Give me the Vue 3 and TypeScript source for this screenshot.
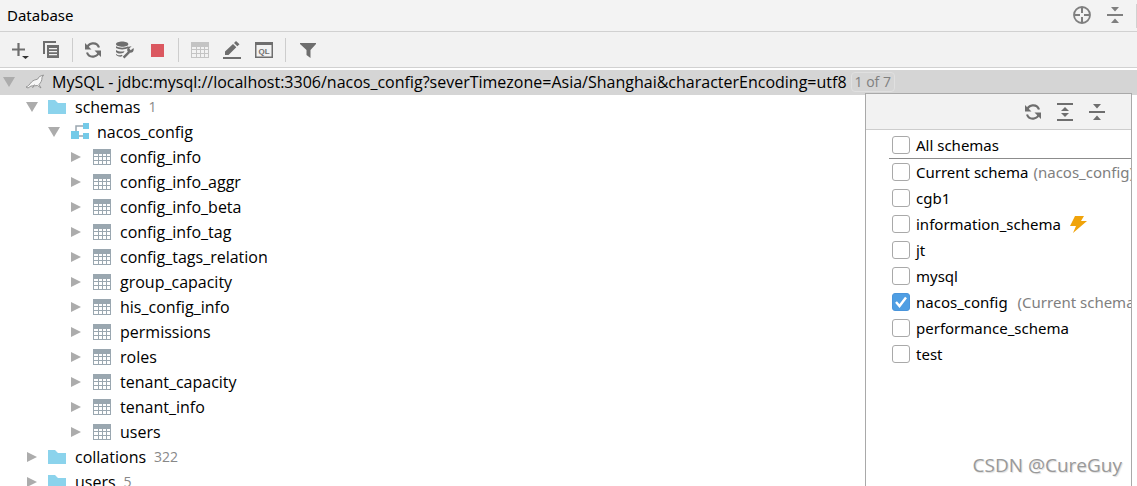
<script setup lang="ts">
import { ref } from 'vue'

interface TreeNode {
  label: string
  kind: 'folder' | 'schema' | 'table'
  level: number
  open: boolean
  count?: number
}

interface SchemaOption {
  id: string
  label: string
  note?: string
  wideNote?: boolean
  bolt?: boolean
  checked: boolean
}

const tables = [
  'config_info', 'config_info_aggr', 'config_info_beta', 'config_info_tag',
  'config_tags_relation', 'group_capacity', 'his_config_info', 'permissions',
  'roles', 'tenant_capacity', 'tenant_info', 'users',
]

const nodes: TreeNode[] = [
  { label: 'schemas', kind: 'folder', level: 1, open: true, count: 1 },
  { label: 'nacos_config', kind: 'schema', level: 2, open: true },
  ...tables.map((label): TreeNode => ({ label, kind: 'table', level: 3, open: false })),
  { label: 'collations', kind: 'folder', level: 1, open: false, count: 322 },
  { label: 'users', kind: 'folder', level: 1, open: false, count: 5 },
]

const allSchemas = ref(false)
const options = ref<SchemaOption[]>([
  { id: 'current', label: 'Current schema', note: '(nacos_config)', checked: false },
  { id: 'cgb1', label: 'cgb1', checked: false },
  { id: 'information', label: 'information_schema', bolt: true, checked: false },
  { id: 'jt', label: 'jt', checked: false },
  { id: 'mysql', label: 'mysql', checked: false },
  { id: 'nacos', label: 'nacos_config', note: '(Current schema)', wideNote: true, checked: true },
  { id: 'performance', label: 'performance_schema', checked: false },
  { id: 'test', label: 'test', checked: false },
])
</script>

<template>
  <div class="window">
    <svg class="defs" aria-hidden="true">
      <symbol id="i-refresh" viewBox="0 0 18 18">
        <path d="M3 8A6.2 6.2 0 0 1 15 6.500M15 10A6.2 6.2 0 0 1 3 11.500" fill="none" stroke="currentColor" stroke-width="2.200" />
        <path d="M1 2v6.500h6.500zM17 16V9.500h-6.500z" fill="currentColor" />
      </symbol>
      <symbol id="i-collapse" viewBox="0 0 18 18">
        <path d="M1 8h16v2H1zM5 1h8L9 5.500zM5 17h8l-4-4.500z" fill="currentColor" />
      </symbol>
      <symbol id="i-expand" viewBox="0 0 18 18">
        <path d="M1 0h16v2H1zM1 16h16v2H1zM5 8h8L9 4zM5 10h8l-4 4z" fill="currentColor" />
      </symbol>
      <symbol id="i-table" viewBox="0 0 18 16">
        <path d="M0 0h18v16H0zM1 5v2h4V5zM6 5v2h3V5zM10 5v2h3V5zM14 5v2h3V5zM1 8v3h4V8zM6 8v3h3V8zM10 8v3h3V8zM14 8v3h3V8zM1 12v3h4v-3zM6 12v3h3v-3zM10 12v3h3v-3zM14 12v3h3v-3z" fill="currentColor" fill-rule="evenodd" />
      </symbol>
      <symbol id="i-folder" viewBox="0 0 18 14">
        <path d="M0 0h7l3 3h8v11H0z" fill="#8bd3ec" />
      </symbol>
      <symbol id="i-schema" viewBox="0 0 18 17">
        <path d="M5 8V3h7M8 13h4" fill="none" stroke="#9aa7b0" stroke-width="1.500" />
        <path d="M12 0h6v6h-6zM0 8h8v8H0zM12 10h6v6h-6z" fill="#74cae8" />
      </symbol>
    </svg>

    <header class="titlebar">
      <h1>Database</h1>
      <div class="title-actions">
        <button type="button" aria-label="Scroll to selection">
          <svg class="ico" viewBox="0 0 18 18"><circle cx="9" cy="9" r="8" fill="none" stroke="currentColor" stroke-width="1.800" /><path d="M9 2v5M9 11v5M2 9h5M11 9h5" stroke="currentColor" stroke-width="2" /></svg>
        </button>
        <button type="button" aria-label="Collapse all"><svg class="ico"><use href="#i-collapse" /></svg></button>
      </div>
      <i class="edge"></i>
    </header>

    <div class="toolbar" role="toolbar" aria-label="Database tools">
      <button type="button" aria-label="New">
        <svg class="ico" viewBox="0 0 18 18"><path d="M7.500 2v13M1 8.500h13" stroke="currentColor" stroke-width="2.200" /><path d="M11 15h7l-3.500 3z" fill="#333" /></svg>
      </button>
      <button type="button" aria-label="Duplicate">
        <svg class="ico" viewBox="0 0 18 18"><path d="M1 13V1h12" fill="none" stroke="currentColor" stroke-width="2" /><path d="M4 4h12v13H4zM6 7v1.300h8V7zM6 10v1.300h8V10zM6 13v1.300h8V13z" fill="currentColor" fill-rule="evenodd" /></svg>
      </button>
      <i class="divider"></i>
      <button type="button" aria-label="Refresh"><svg class="ico"><use href="#i-refresh" /></svg></button>
      <button type="button" aria-label="Data source properties">
        <svg class="ico" viewBox="0 0 19 18">
          <path d="M0 3c0-3.800 13-3.800 13 0s-13 3-13 0zM0 5c3 2 10 2 13 0v2c-3 2-10 2-13 0zM0 9c3 2 7 2 9 1l-1 2c-3 1-6 1-8-1zM0 13c2 2 4 2 6 1l1 1-2 1c-3 0-4-1-5-2z" fill="currentColor" />
          <path d="M8 17l6-6" stroke="currentColor" stroke-width="2.600" />
          <path d="M16.500 5l-2.500 2.500 1.500 1.700 3-2.200c1 3-1.500 5.700-4.500 4.700-2.500-.8-3-4-.8-6z" fill="currentColor" />
        </svg>
      </button>
      <button type="button" aria-label="Stop"><svg class="ico" viewBox="0 0 18 18"><path d="M3 3h13v13H3z" fill="#db5860" /></svg></button>
      <i class="divider"></i>
      <button type="button" class="off" aria-label="Open table" disabled><svg class="ico"><use href="#i-table" /></svg></button>
      <button type="button" aria-label="Edit">
        <svg class="ico" viewBox="0 0 18 18"><path d="M0 16h18v2H0zM2 14v-3.500L10 3l3.300 3.300L5.500 14zM11 2l2-2 3.500 3.300-2.200 2z" fill="currentColor" /></svg>
      </button>
      <button type="button" aria-label="Query console">
        <svg class="ico" viewBox="0 0 18 18"><path d="M0 1h18v16H0zM1.500 4v11.500h15V4z" fill="currentColor" fill-rule="evenodd" /><text x="9" y="13" text-anchor="middle" class="ql">QL</text></svg>
      </button>
      <i class="divider"></i>
      <button type="button" aria-label="Filter"><svg class="ico" viewBox="0 0 18 18"><path d="M2 2h16v1l-5.500 6v8l-4-3V9L2 3z" fill="currentColor" /></svg></button>
    </div>

    <main class="content">
      <ul class="tree" role="tree">
        <li class="row root" role="treeitem" aria-expanded="true" aria-selected="true">
          <svg class="arrow" viewBox="0 0 12 12"><path d="M0 1h12L6 11z" /></svg>
          <svg class="seal" viewBox="0 0 20 16"><path d="M1 13c2-.5 3.500-2.500 5.500-5 2-2 4-2.200 6-2.800L14.500 2.500 18.500 1 17 3.500c0 3-1 5-3 7l2 3.500-3.500-2.500c-2 .5-4 .2-6.500.5L3 14zM9.500 10.500L7.500 14" fill="#f7f7f7" stroke="#8c8c8c" stroke-width=".9" /></svg>
          <span>MySQL - jdbc:mysql://localhost:3306/nacos_config?severTimezone=Asia/Shanghai&amp;characterEncoding=utf8</span>
          <button type="button" class="badge">1 of 7</button>
        </li>
        <li v-for="(node, i) in nodes" :key="i" class="row" :class="`level-${node.level}`" role="treeitem" :aria-expanded="node.open">
          <svg class="arrow" viewBox="0 0 12 12"><path :d="node.open ? 'M0 1h12L6 11z' : 'M1 1v10l10-5z'" /></svg>
          <svg class="node-icon" :class="node.kind"><use :href="`#i-${node.kind}`" /></svg>
          <span>{{ node.label }}</span>
          <span v-if="node.count" class="count">{{ node.count }}</span>
        </li>
      </ul>
    </main>

    <aside class="popup">
      <div class="popup-bar">
        <button type="button" aria-label="Refresh schemas"><svg class="ico"><use href="#i-refresh" /></svg></button>
        <button type="button" aria-label="Expand all"><svg class="ico"><use href="#i-expand" /></svg></button>
        <button type="button" aria-label="Collapse all schemas"><svg class="ico"><use href="#i-collapse" /></svg></button>
      </div>
      <div class="options">
        <div class="option all">
          <input id="all" v-model="allSchemas" type="checkbox">
          <label for="all">All schemas</label>
        </div>
        <div v-for="option in options" :key="option.id" class="option">
          <input :id="option.id" v-model="option.checked" type="checkbox">
          <label :for="option.id">{{ option.label }}</label>
          <span v-if="option.note" class="note" :class="{ spaced: option.wideNote }">{{ option.note }}</span>
          <svg v-if="option.bolt" class="bolt" viewBox="0 0 18 18"><path d="M6 1h9l-3 5h6L4 18l3-7H1z" fill="#f0a30a" /></svg>
        </div>
      </div>
    </aside>
    <div class="watermark">CSDN @CureGuy</div>
  </div>
</template>

<style>
body { margin: 0; }
</style>

<style scoped>
.window {
  position: relative;
  display: flex;
  flex-direction: column;
  height: 100vh;
  overflow: hidden;
  background: #fff;
  color: #000;
  font: 16px/24px "Open Sans", "Noto Sans", sans-serif;
}
.defs { position: absolute; width: 0; height: 0; }
button {
  display: flex;
  padding: 0;
  border: 0;
  background: none;
  color: #6e6e6e;
  font: inherit;
}
.ico { display: block; width: 18px; height: 18px; }
.titlebar {
  display: flex;
  flex: none;
  align-items: center;
  justify-content: space-between;
  height: 31px;
  padding-left: 7px;
  border-bottom: 1px solid #d1d1d1;
  background: #f3f3f3;
}
h1 { flex: 1; margin: 0; padding-bottom: 2px; font: 400 15px/24px "Noto Sans", sans-serif; }
.title-actions { display: flex; gap: 15px; padding: 0 12px 2px 0; }
.title-actions button { color: #7f7f7f; }
.edge { width: 1px; height: 24px; background: #d1d1d1; }
.toolbar {
  display: flex;
  flex: none;
  align-items: center;
  gap: 14px;
  height: 35px;
  padding-left: 11px;
  border-bottom: 1px solid #d1d1d1;
  background: #f2f2f2;
}
.divider { width: 1px; height: 24px; margin: 0 -3px; background: #cdcdcd; }
.divider ~ .divider { margin: 0 -2px; }
.toolbar .off { color: #c4c4c4; }
.off .ico { height: 16px; }
.ql { fill: #6e6e6e; font: 700 8px "Liberation Sans", sans-serif; }
.content { flex: 1; min-height: 0; padding-top: 2px; overflow: hidden; }
.tree { margin: 0; padding: 0; list-style: none; }
.row {
  display: flex;
  align-items: center;
  box-sizing: border-box;
  height: 25px;
  padding-bottom: 2px;
  white-space: nowrap;
}
.root { padding-left: 3px; background: #d5d5d5; }
.level-1 { padding-left: 26px; }
.level-2 { padding-left: 48px; }
.level-3 { padding-left: 70px; }
.arrow { flex: none; width: 12px; height: 12px; margin-right: 10px; fill: #acacac; }
.seal { flex: none; width: 20px; height: 16px; margin-right: 7px; }
.node-icon { flex: none; width: 18px; height: 16px; margin-right: 9px; }
.folder { height: 14px; }
.schema { height: 17px; margin-left: 1px; margin-right: 8px; }
.table { margin-left: 1px; color: #9aa7b0; }
.count { margin-left: 8px; color: #888; font-size: 14px; }
.badge {
  margin-left: 4px;
  padding: 0 3px;
  border: 1px solid #e0e0e0;
  border-radius: 4px;
  color: #808080;
  font-size: 14px;
  line-height: 18px;
}
.popup {
  position: absolute;
  top: 93px;
  right: 5px;
  bottom: 0;
  width: 265px;
  border: 1px solid #a9a9a9;
  border-bottom: 0;
  background: #fff;
  font: 15px/24px "Noto Sans", sans-serif;
}
.popup-bar {
  display: flex;
  align-items: center;
  justify-content: flex-end;
  gap: 14px;
  height: 35px;
  padding-right: 25px;
  border-bottom: 1px solid #cdcdcd;
  background: #f2f2f2;
}
.options { padding: 2px 0 0 23px; overflow: hidden; }
.option { display: flex; align-items: center; height: 26px; white-space: nowrap; }
.all { border-bottom: 1px solid #8c8c8c; }
.option input {
  flex: none;
  width: 18px;
  height: 18px;
  margin: 0 6px 0 3px;
  border: 1px solid #a9a9a9;
  border-radius: 3px;
  appearance: none;
  background: #fff;
}
.option input:checked {
  border-color: #4a95db;
  background: #4f9ee3 url("data:image/svg+xml,%3Csvg xmlns='http://www.w3.org/2000/svg' viewBox='0 0 16 16'%3E%3Cpath d='M3 8l3.500 4L13 3.500' fill='none' stroke='white' stroke-width='2.400'/%3E%3C/svg%3E");
}
.note { margin-left: 5px; color: #808080; }
.spaced { margin-left: 10px; }
.bolt { width: 18px; height: 18px; margin-left: 8px; }
.watermark {
  position: absolute;
  right: 15px;
  bottom: 9px;
  color: #999;
  font-size: 19px;
  line-height: 24px;
  text-shadow: 1px 1px 1px #ddd;
}
</style>
